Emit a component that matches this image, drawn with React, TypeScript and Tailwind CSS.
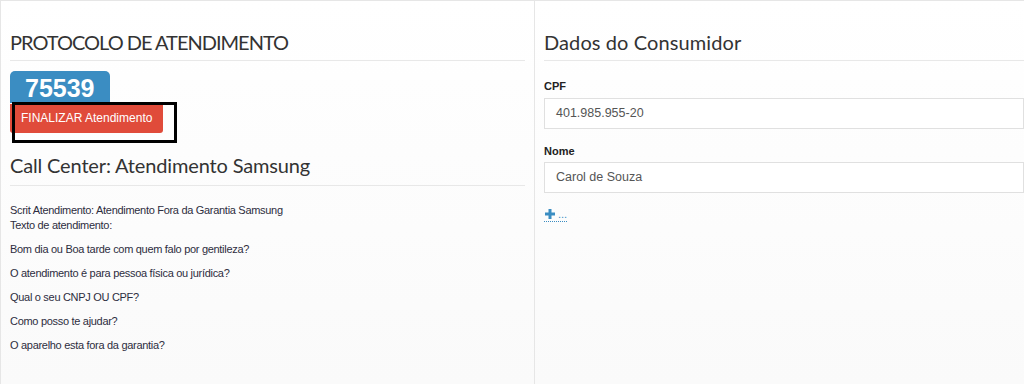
import React from 'react';

const perguntas = [
  'Bom dia ou Boa tarde com quem falo por gentileza?',
  'O atendimento é para pessoa física ou jurídica?',
  'Qual o seu CNPJ OU CPF?',
  'Como posso te ajudar?',
  'O aparelho esta fora da garantia?',
];

const App: React.FC = () => {
  return (
    <div className="flex h-[384px] w-[1024px] overflow-hidden bg-white font-['Liberation_Sans',Arial,sans-serif]">
      {/* Protocolo */}
      <section className="w-[535px] shrink-0 border-t border-l border-r border-[#e6e6e6] bg-gradient-to-b from-white to-[#fafafa] pl-[9px] pr-[9px] pt-[28px]">
        <h3 className="font-['Lato',sans-serif] text-[20px] leading-[26px] tracking-[-1px] text-[#333]">PROTOCOLO DE ATENDIMENTO</h3>
        <hr className="mt-[5px] border-[#e8e8e8]" />

        <div className="relative mt-[10px]">
          <div className="inline-block rounded-t-[5px] bg-[#3b8dc2] px-[15px] pt-[4px] pb-[1px] text-[25px] font-bold leading-[27px] text-white">
            75539
          </div>
          <div>
            <button className="rounded-b-[3px] bg-[#e04b3a] px-[11px] py-[6px] text-[12px] leading-[17px] text-white">
              FINALIZAR Atendimento
            </button>
          </div>
          <div className="absolute left-[2px] top-[31px] h-[41px] w-[165px] border-[3px] border-black" />
        </div>

        <h3 className="mt-[19px] font-['Lato',sans-serif] text-[20px] leading-[26px] tracking-[-0.15px] text-[#333]">Call Center: Atendimento Samsung</h3>
        <hr className="mt-[7px] border-[#e8e8e8]" />

        <div className="mt-[17px] text-[11px] leading-[15px] tracking-[-0.3px] text-[#2d2d40]">
          <p>Scrit Atendimento: Atendimento Fora da Garantia Samsung</p>
          <p>Texto de atendimento:</p>
          {perguntas.map((p) => (
            <p key={p} className="mt-[9px]">{p}</p>
          ))}
        </div>
      </section>

      {/* Consumidor */}
      <section className="flex-1 border-t border-[#e6e6e6] bg-gradient-to-b from-white to-[#fafafa] pl-[9px] pt-[28px]">
        <h3 className="font-['Lato',sans-serif] text-[20px] leading-[26px] tracking-[0.1px] text-[#333]">Dados do Consumidor</h3>
        <hr className="mt-[5px] border-[#e8e8e8]" />

        <label className="mt-[18px] block text-[11px] font-bold leading-[14px] text-[#222]">CPF</label>
        <div className="mt-[5px] h-[31px] border border-[#e0e0e0] bg-white px-[11px] text-[12.5px] leading-[29px] text-[#555]">401.985.955-20</div>

        <label className="mt-[15px] block text-[11px] font-bold leading-[14px] text-[#222]">Nome</label>
        <div className="mt-[4px] h-[31px] border border-[#e0e0e0] bg-white px-[11px] text-[12.5px] leading-[29px] text-[#555]">Carol de Souza</div>

        <a className="mt-[15px] inline-flex items-center gap-[3px] border-b border-dotted border-[#3b8dc2] pb-[1px] pl-[1px] text-[11px] leading-[12px] text-[#3b8dc2]">
          <svg width="10" height="10" viewBox="0 0 10 10" fill="#3b8dc2">
            <rect x="3.5" y="0" width="3" height="10" />
            <rect x="0" y="3.5" width="10" height="3" />
          </svg>
          <span>...</span>
        </a>
      </section>
    </div>
  );
};

export default App;
